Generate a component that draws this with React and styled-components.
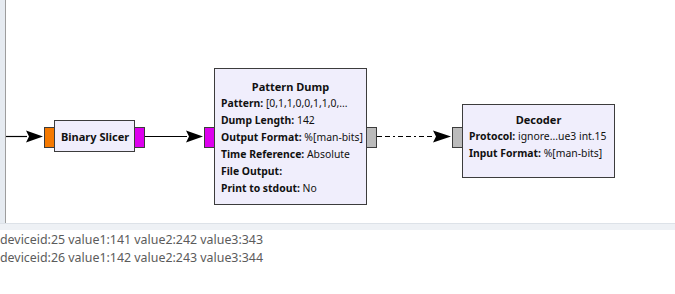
import React from 'react'
import styled, { createGlobalStyle } from 'styled-components'

const GlobalStyle = createGlobalStyle`
  html, body {
    margin: 0;
    padding: 0;
    background: #ffffff;
  }
  body {
    font-family: 'Noto Sans', 'Open Sans', sans-serif;
  }
`

// canvas starts after the side strip and its border
const OX = 6

const blocks = [
  {
    id: 'slicer',
    title: 'Binary Slicer',
    x: 54,
    y: 120,
    w: 81,
    h: 32,
    pad: 0,
    centered: true,
    ins: [{ top: 6, color: '#f57900' }],
    outs: [{ top: 6, color: '#dd00ee' }],
    params: []
  },
  {
    id: 'dump',
    title: 'Pattern Dump',
    x: 214,
    y: 68,
    w: 153,
    h: 137,
    pad: 9,
    ins: [{ top: 58, color: '#dd00ee' }],
    outs: [{ top: 58, color: '#bbbbbb' }],
    params: [
      ['Pattern', '[0,1,1,0,0,1,1,0,...'],
      ['Dump Length', '142'],
      ['Output Format', '%[man-bits]'],
      ['Time Reference', 'Absolute'],
      ['File Output', ''],
      ['Print to stdout', 'No']
    ]
  },
  {
    id: 'decoder',
    title: 'Decoder',
    x: 462,
    y: 104,
    w: 153,
    h: 74,
    pad: 6,
    ins: [{ top: 22, color: '#bbbbbb' }],
    outs: [],
    params: [
      ['Protocol', 'ignore...ue3 int.15'],
      ['Input Format', '%[man-bits]']
    ]
  }
]

const edges = [
  { x1: 0, x2: 27, ax: 26, tip: 43, y: 136.5, dashed: false },
  { x1: 145, x2: 187, ax: 186, tip: 203, y: 136.5, dashed: false },
  { x1: 377, x2: 434, ax: 433, tip: 451, y: 136.5, dashed: true }
]

const Page = styled.div`
  width: 675px;
  height: 294px;
  display: flex;
  flex-direction: column;
  overflow: hidden;
`

const Editor = styled.div`
  height: 223px;
  display: flex;
`

const SideStrip = styled.div`
  width: 5px;
  background: #e6ebf1;
`

const Canvas = styled.div`
  flex: 1;
  position: relative;
  background: #ffffff;
  border-left: 1px solid #9d9d9d;
`

const Wires = styled.svg`
  position: absolute;
  left: 0;
  top: 0;
  width: 100%;
  height: 100%;
`

const Block = styled.div`
  position: absolute;
  box-sizing: border-box;
  background: #f0eefc;
  border: 1px solid #3c3c3c;
  padding: ${p => p.$pad}px 6px 0 6px;
  display: flex;
  flex-direction: column;
  justify-content: ${p => (p.$centered ? 'center' : 'flex-start')};
  color: #111111;
`

const Title = styled.div`
  font-size: 11px;
  font-weight: 700;
  line-height: 17px;
  text-align: center;
  white-space: nowrap;
`

const Param = styled.div`
  font-size: 10.4px;
  line-height: 17px;
  white-space: nowrap;

  b {
    font-weight: 700;
  }
`

const Port = styled.div`
  position: absolute;
  box-sizing: border-box;
  width: 11px;
  height: 21px;
  top: ${p => p.$top}px;
  ${p => (p.$side === 'in' ? 'left: -11px;' : 'right: -11px;')}
  background: ${p => p.$color};
  border: 1px solid #3c3c3c;
`

const Splitter = styled.div`
  height: 6px;
  background: #eef1f5;
  border-top: 1px solid #dde2e8;
`

const Console = styled.div`
  flex: 1;
  padding: 1px 0 0 0;
  font-size: 12.4px;
  line-height: 18px;
  color: #5b5b5b;
`

const Line = styled.div`
  white-space: nowrap;
`

const Edge = ({ e }) => {
  const y = e.y
  return (
    <g>
      <line
        x1={e.x1 - OX}
        y1={y}
        x2={e.x2 - OX}
        y2={y}
        stroke='#000'
        strokeWidth='1.2'
        strokeDasharray={e.dashed ? '5 3 5 3 2 3' : undefined}
      />
      <polygon
        points={`${e.ax - OX},${y - 6} ${e.tip - OX},${y} ${e.ax - OX},${y + 6} ${e.ax + 3 - OX},${y}`}
        fill='#000'
      />
    </g>
  )
}

const FlowBlock = ({ b }) => (
  <Block
    $pad={b.pad}
    $centered={b.centered}
    style={{ left: b.x - OX, top: b.y, width: b.w, height: b.h }}
  >
    <Title>{b.title}</Title>
    {b.params.map(([k, v]) => (
      <Param key={k}>
        <b>{k}:</b> {v}
      </Param>
    ))}
    {b.ins.map((p, i) => (
      <Port key={'i' + i} $side='in' $top={p.top} $color={p.color} />
    ))}
    {b.outs.map((p, i) => (
      <Port key={'o' + i} $side='out' $top={p.top} $color={p.color} />
    ))}
  </Block>
)

const App = () => (
  <Page>
    <GlobalStyle />
    <Editor>
      <SideStrip />
      <Canvas>
        <Wires>
          {edges.map((e, i) => (
            <Edge key={i} e={e} />
          ))}
        </Wires>
        {blocks.map(b => (
          <FlowBlock key={b.id} b={b} />
        ))}
      </Canvas>
    </Editor>
    <Splitter />
    <Console>
      <Line>deviceid:25 value1:141 value2:242 value3:343</Line>
      <Line>deviceid:26 value1:142 value2:243 value3:344</Line>
    </Console>
  </Page>
)

export default App
